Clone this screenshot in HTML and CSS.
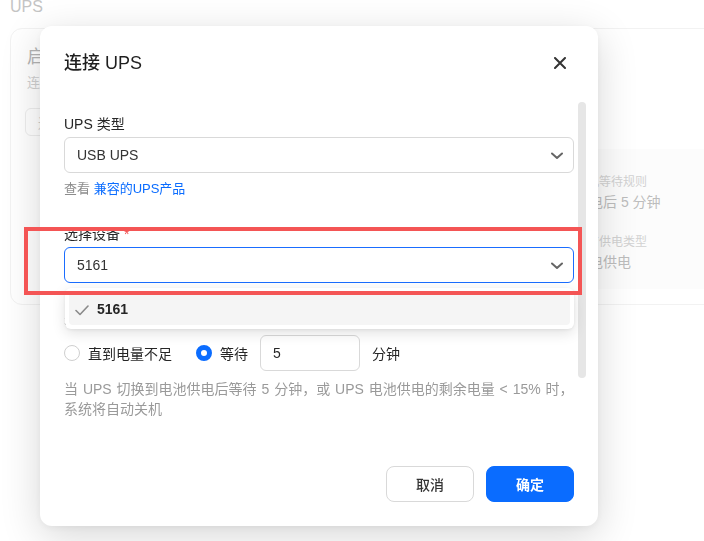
FILE: index.html
```html
<!DOCTYPE html>
<html lang="zh-CN">
<head>
<meta charset="utf-8">
<title>UPS</title>
<link rel="stylesheet" href="styles.css">
</head>
<body>
  <main class="page">
    <h1 class="page-title">UPS</h1>
    <section class="card">
      <div class="card-main">
        <div class="card-title">启用 UPS</div>
        <div class="card-desc">连接 UPS 后，断电时系统可自动关机</div>
        <button class="ghost-btn" type="button">连接</button>
      </div>
      <aside class="card-info">
        <div class="info-label">关机等待规则</div>
        <div class="info-value">断电后 5 分钟</div>
        <div class="info-label gap">当前供电类型</div>
        <div class="info-value">市电供电</div>
      </aside>
    </section>
  </main>

  <div class="modal" role="dialog">
    <header class="modal-header">
      <h2 class="modal-title">连接 UPS</h2>
      <button class="close-btn" type="button" aria-label="关闭">
        <svg width="12" height="12" viewBox="0 0 12 12"><path d="M1 1 L11 11 M11 1 L1 11" stroke="#333" stroke-width="2" stroke-linecap="round"/></svg>
      </button>
    </header>

    <div class="modal-body">
      <div class="field">
        <label class="field-label">UPS 类型</label>
        <div class="select">
          <span>USB UPS</span>
          <svg class="chevron" width="12" height="8" viewBox="0 0 12 8"><path d="M1 1.5 L6 6 L11 1.5" fill="none" stroke="#666" stroke-width="2" stroke-linecap="round" stroke-linejoin="round"/></svg>
        </div>
        <div class="hint">查看 <a class="link" href="#">兼容的UPS产品</a></div>
      </div>

      <div class="field">
        <label class="field-label">选择设备 <span class="required">*</span></label>
        <div class="select-wrap">
          <div class="select active">
            <span>5161</span>
            <svg class="chevron" width="12" height="8" viewBox="0 0 12 8"><path d="M1 1.5 L6 6 L11 1.5" fill="none" stroke="#666" stroke-width="2" stroke-linecap="round" stroke-linejoin="round"/></svg>
          </div>
          <ul class="dropdown">
            <li class="option selected">
              <svg width="14" height="11" viewBox="0 0 14 11"><path d="M1 5.5 L5 9.5 L13 1" fill="none" stroke="#8a8a8a" stroke-width="1.6" stroke-linecap="round" stroke-linejoin="round"/></svg>
              <span>5161</span>
            </li>
          </ul>
        </div>
      </div>

      <div class="field">
        <label class="field-label">关机等待规则</label>
        <div class="radio-row">
          <label class="radio"><span class="dot"></span>直到电量不足</label>
          <label class="radio checked"><span class="dot"></span>等待</label>
          <div class="num-input">5</div>
          <span class="unit">分钟</span>
        </div>
        <p class="help">当 UPS 切换到电池供电后等待 5 分钟，或 UPS 电池供电的剩余电量 &lt; 15% 时，<br>系统将自动关机</p>
      </div>

      <div class="scroll-thumb"></div>
    </div>

    <footer class="modal-footer">
      <button class="btn" type="button">取消</button>
      <button class="btn primary" type="button">确定</button>
    </footer>
  </div>

  <div class="highlight"></div>
</body>
</html>
```

FILE: styles.css
```css
* { box-sizing: border-box; }

html, body {
  margin: 0;
  padding: 0;
  width: 704px;
  height: 541px;
  overflow: hidden;
  background: #ffffff;
  font-family: "Liberation Sans", "Noto Sans CJK SC", sans-serif;
  color: #262626;
}

/* background page */
.page {
  padding: 0 0 0 10px;
}

.page-title {
  margin: -3px 0 0;
  font-size: 16px;
  line-height: 20px;
  font-weight: 400;
  color: #c4c4c4;
  height: 31px;
}

.card {
  width: 760px;
  height: 277px;
  border: 1px solid #f2f2f2;
  border-radius: 12px;
  padding: 15px 16px 16px 16px;
  display: flex;
  justify-content: space-between;
}

.card-title {
  font-size: 18px;
  line-height: 26px;
  color: #b4b4b4;
}

.card-desc {
  margin-top: 3px;
  font-size: 13px;
  line-height: 20px;
  color: #d0d0d0;
}

.ghost-btn {
  margin-top: 15px;
  margin-left: -2px;
  height: 28px;
  padding: 0 12px;
  border: 1px solid #ededed;
  border-radius: 6px;
  background: #fff;
  font: inherit;
  font-size: 13px;
  color: #cfcfcf;
}

.card-info {
  align-self: flex-end;
  width: 194px;
  margin-bottom: -1px;
  height: 140px;
  padding: 24px 16px 16px 16px;
  background: #fcfcfc;
  border-radius: 8px;
}

.info-label {
  font-size: 12px;
  line-height: 18px;
  color: #d2d2d2;
}

.info-label.gap { margin-top: 20px; }

.info-value {
  font-size: 14px;
  line-height: 22px;
  color: #bdbdbd;
}

/* dialog */
.modal {
  position: fixed;
  left: 40px;
  top: 26px;
  width: 558px;
  height: 500px;
  background: #fff;
  border-radius: 12px;
  box-shadow: 0 10px 40px rgba(0, 0, 0, 0.16), 0 2px 8px rgba(0, 0, 0, 0.05);
  display: flex;
  flex-direction: column;
}

.modal-header {
  padding: 24px 24px 0 24px;
  height: 50px;
  display: flex;
  align-items: center;
  justify-content: space-between;
}

.modal-title {
  margin: 0;
  font-size: 18px;
  line-height: 26px;
  font-weight: 500;
  color: #1f1f1f;
}

.close-btn {
  border: 0;
  background: none;
  padding: 0;
  width: 14px;
  height: 14px;
  display: flex;
  align-items: center;
  justify-content: center;
  margin-right: 7px;
}

.modal-body {
  position: relative;
  flex: 1;
  margin-top: 20px;
  padding: 17px 24px 0 24px;
  overflow: hidden;
}

.field + .field { margin-top: 24px; }

.field-label {
  display: block;
  font-size: 14px;
  line-height: 22px;
  color: #262626;
  margin-bottom: 2px;
}

.required { color: #f24d4d; }

.select {
  height: 36px;
  border: 1px solid #d9d9d9;
  border-radius: 6px;
  padding: 0 10px 0 12px;
  display: flex;
  align-items: center;
  justify-content: space-between;
  font-size: 14px;
  color: #333;
}

.select.active { border-color: #1a6dff; }

.chevron { margin-top: 1px; }

.hint {
  margin-top: 6px;
  font-size: 13px;
  line-height: 20px;
  color: #8c8c8c;
}

.link {
  color: #0a6cff;
  text-decoration: none;
}

.select-wrap { position: relative; }

.dropdown {
  position: absolute;
  left: 1px;
  right: 0;
  top: 41px;
  margin: 0;
  padding: 4px;
  list-style: none;
  background: #fff;
  border-radius: 6px;
  box-shadow: 0 4px 14px rgba(0, 0, 0, 0.12), 0 1px 3px rgba(0, 0, 0, 0.06);
  z-index: 2;
}

.option {
  height: 33px;
  padding: 0 6px;
  display: flex;
  align-items: center;
  gap: 8px;
  border-radius: 4px;
  font-size: 14px;
  font-weight: 700;
  color: #262626;
}

.option svg { margin-top: 4px; }

.option.selected { background: #f5f5f5; }

.radio-row {
  margin-top: 6px;
  height: 36px;
  display: flex;
  align-items: center;
  font-size: 14px;
  color: #262626;
}

.radio {
  display: flex;
  align-items: center;
  gap: 8px;
  margin-right: 24px;
}

.radio .dot {
  width: 16px;
  height: 16px;
  border-radius: 50%;
  border: 1px solid #cfcfcf;
  background: #fff;
}

.radio.checked { margin-right: 12px; }

.radio.checked .dot {
  border: 5px solid #0a6cff;
}

.num-input {
  width: 100px;
  height: 36px;
  border: 1px solid #d9d9d9;
  border-radius: 6px;
  padding: 0 12px;
  display: flex;
  align-items: center;
  margin-right: 12px;
}

.help {
  margin: 8px 0 0;
  font-size: 14px;
  line-height: 20px;
  word-spacing: 1px;
  white-space: nowrap;
  color: #9a9a9a;
}

.scroll-thumb {
  position: absolute;
  right: 12px;
  top: 6px;
  width: 8px;
  height: 276px;
  border-radius: 4px;
  background: #e6e6e6;
}

.modal-footer {
  padding: 0 24px 24px 24px;
  display: flex;
  justify-content: flex-end;
  gap: 12px;
}

.btn {
  width: 88px;
  height: 36px;
  border: 1px solid #d9d9d9;
  border-radius: 8px;
  background: #fff;
  font: inherit;
  font-size: 14px;
  font-weight: 500;
  color: #333;
}

.btn.primary {
  border-color: #0a6cff;
  background: #0a6cff;
  color: #fff;
  font-weight: 700;
}

/* review callout drawn over the device picker */
.highlight {
  position: fixed;
  left: 24px;
  top: 227px;
  width: 558px;
  height: 68px;
  border: 4px solid #f45555;
  z-index: 5;
}
```
